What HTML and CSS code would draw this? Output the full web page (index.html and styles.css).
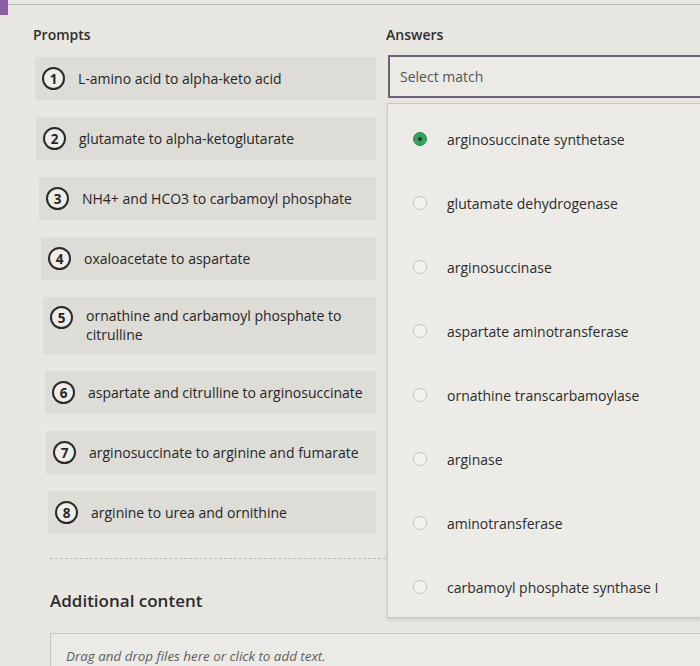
FILE: index.html
```html
<!DOCTYPE html>
<html>
<head>
<meta charset="utf-8">
<link rel="stylesheet" href="styles.css">
</head>
<body>
<div class="topline"></div>
<div class="tab-mark"></div>
<div class="page">
  <section class="prompts">
    <h2 class="col-title">Prompts</h2>
    <ol class="prompt-list">
      <li class="prompt"><span class="num">1</span><span class="ptext">L-amino acid to alpha-keto acid</span></li>
      <li class="prompt"><span class="num">2</span><span class="ptext">glutamate to alpha-ketoglutarate</span></li>
      <li class="prompt"><span class="num">3</span><span class="ptext">NH4+ and HCO3 to carbamoyl phosphate</span></li>
      <li class="prompt"><span class="num">4</span><span class="ptext">oxaloacetate to aspartate</span></li>
      <li class="prompt tall"><span class="num">5</span><span class="ptext">ornathine and carbamoyl phosphate to<br>citrulline</span></li>
      <li class="prompt"><span class="num">6</span><span class="ptext">aspartate and citrulline to arginosuccinate</span></li>
      <li class="prompt"><span class="num">7</span><span class="ptext">arginosuccinate to arginine and fumarate</span></li>
      <li class="prompt"><span class="num">8</span><span class="ptext">arginine to urea and ornithine</span></li>
    </ol>
    <div class="dashed"></div>
    <h3 class="additional">Additional content</h3>
  </section>
  <section class="answers">
    <h2 class="col-title">Answers</h2>
    <div class="select">Select match</div>
    <ul class="menu">
      <li class="opt"><span class="radio on"></span><span>arginosuccinate synthetase</span></li>
      <li class="opt"><span class="radio"></span><span>glutamate dehydrogenase</span></li>
      <li class="opt"><span class="radio"></span><span>arginosuccinase</span></li>
      <li class="opt"><span class="radio"></span><span>aspartate aminotransferase</span></li>
      <li class="opt"><span class="radio"></span><span>ornathine transcarbamoylase</span></li>
      <li class="opt"><span class="radio"></span><span>arginase</span></li>
      <li class="opt"><span class="radio"></span><span>aminotransferase</span></li>
      <li class="opt"><span class="radio"></span><span>carbamoyl phosphate synthase I</span></li>
    </ul>
  </section>
  <div class="dropzone">Drag and drop files here or click to add text.</div>
</div>
</body>
</html>
```

FILE: styles.css
```css
html, body {
  margin: 0;
  padding: 0;
}
body {
  width: 700px;
  height: 666px;
  overflow: hidden;
  background: #e8e7e2;
  font-family: "Open Sans", "Noto Sans", sans-serif;
  color: #333;
  position: relative;
}
.topline {
  height: 4px;
  border-bottom: 1px solid #b9b8b4;
}
.tab-mark {
  position: absolute;
  left: 0;
  top: 0;
  width: 8px;
  height: 15px;
  background: #8d5fa3;
}
.page {
  display: grid;
  grid-template-columns: 386px 1fr;
}
.col-title {
  margin: 0;
  padding-top: 20px;
  font-size: 14px;
  line-height: 20px;
  font-weight: 600;
  color: #2e2e2e;
}
.prompts {
  padding-left: 33px;
}
.prompts .col-title {
  margin-bottom: 12px;
}
.prompt-list {
  list-style: none;
  margin: 0;
  padding: 0 10px 0 2px;
  display: flex;
  flex-direction: column;
  gap: 17px;
}
.prompt {
  height: 43px;
  background: #dddcd6;
  display: flex;
  align-items: center;
  padding-left: 7px;
  font-size: 14px;
  color: #262626;
}
.prompt:nth-child(2) { margin-left: 1px; }
.prompt:nth-child(3) { margin-left: 4px; }
.prompt:nth-child(4) { margin-left: 6px; }
.prompt:nth-child(5) { margin-left: 8px; }
.prompt:nth-child(6) { margin-left: 10px; }
.prompt:nth-child(7) { margin-left: 11px; }
.prompt:nth-child(8) { margin-left: 13px; }
.prompt.tall {
  height: 57px;
  align-items: flex-start;
  padding-top: 9px;
  box-sizing: border-box;
}
.prompt.tall .ptext {
  line-height: 19px;
}
.num {
  width: 19px;
  height: 19px;
  border: 2px solid #2a2a2a;
  border-radius: 50%;
  display: inline-flex;
  align-items: center;
  justify-content: center;
  font-size: 13.5px;
  font-weight: 700;
  flex: none;
  margin-right: 13px;
  background: #eeede9;
}
.dashed {
  margin: 24px 0 0 17px;
  border-top: 1px dashed #bdbcb7;
}
.additional {
  margin: 30px 0 0 17px;
  font-size: 17px;
  line-height: 24px;
  font-weight: 600;
  color: #2c2c2c;
}
.answers .col-title {
  margin-bottom: 10px;
}
.select {
  margin-left: 2px;
  height: 43px;
  box-sizing: border-box;
  border: 2px solid #6f6377;
  border-right: none;
  padding-left: 10px;
  display: flex;
  align-items: center;
  font-size: 14px;
  color: #555;
  background: #ebeae5;
}
.menu {
  list-style: none;
  margin: 5px 0 0 1px;
  padding: 3px 0 0 0;
  height: 515px;
  box-sizing: border-box;
  border: 1px solid #c9c8c3;
  border-right: none;
  background: #ecebe7;
  box-shadow: 0 2px 4px rgba(0,0,0,0.12);
}
.opt {
  height: 64px;
  display: flex;
  align-items: center;
  padding-left: 25px;
  font-size: 14px;
  color: #2b2b2b;
}
.radio {
  width: 12px;
  height: 12px;
  border: 1.8px solid #c6c5c0;
  border-radius: 50%;
  background: #f4f3f0;
  margin-right: 20px;
  flex: none;
}
.radio.on {
  background: #36a05c;
  border-color: #2f8a50;
  position: relative;
}
.radio.on::after {
  content: "";
  position: absolute;
  left: 4px;
  top: 4px;
  width: 4px;
  height: 4px;
  border-radius: 50%;
  background: #1a3a26;
}
.dropzone {
  grid-column: 1 / span 2;
  margin: 15px 0 0 50px;
  height: 60px;
  box-sizing: border-box;
  border: 1px solid #c6c5c0;
  border-right: none;
  background: #ebeae6;
  padding: 13px 0 0 15px;
  font-size: 13.4px;
  line-height: 18px;
  font-style: italic;
  color: #5e5e5e;
}
```
